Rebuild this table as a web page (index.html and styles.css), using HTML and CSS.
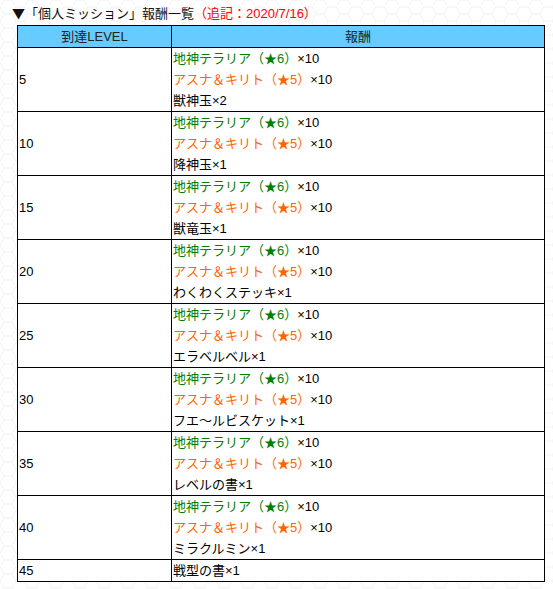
FILE: index.html
```html
<!DOCTYPE html>
<html lang="ja">
<head>
<meta charset="utf-8">
<link rel="stylesheet" href="styles.css">
</head>
<body>
<div class="page">
  <p class="title"><span class="mark">▼</span>「個人ミッション」報酬一覧<span class="note">（追記：2020/7/16）</span></p>
  <table class="rewards">
    <colgroup><col class="c-level"><col class="c-reward"></colgroup>
    <thead>
      <tr><th>到達LEVEL</th><th>報酬</th></tr>
    </thead>
    <tbody>
      <tr><td>5</td><td><span class="g">地神テラリア（★6）</span>×10<br><span class="o">アスナ＆キリト（★5）</span>×10<br>獣神玉×2</td></tr>
      <tr><td>10</td><td><span class="g">地神テラリア（★6）</span>×10<br><span class="o">アスナ＆キリト（★5）</span>×10<br>降神玉×1</td></tr>
      <tr><td>15</td><td><span class="g">地神テラリア（★6）</span>×10<br><span class="o">アスナ＆キリト（★5）</span>×10<br>獣竜玉×1</td></tr>
      <tr><td>20</td><td><span class="g">地神テラリア（★6）</span>×10<br><span class="o">アスナ＆キリト（★5）</span>×10<br>わくわくステッキ×1</td></tr>
      <tr><td>25</td><td><span class="g">地神テラリア（★6）</span>×10<br><span class="o">アスナ＆キリト（★5）</span>×10<br>エラベルベル×1</td></tr>
      <tr><td>30</td><td><span class="g">地神テラリア（★6）</span>×10<br><span class="o">アスナ＆キリト（★5）</span>×10<br>フエ〜ルビスケット×1</td></tr>
      <tr><td>35</td><td><span class="g">地神テラリア（★6）</span>×10<br><span class="o">アスナ＆キリト（★5）</span>×10<br>レベルの書×1</td></tr>
      <tr><td>40</td><td><span class="g">地神テラリア（★6）</span>×10<br><span class="o">アスナ＆キリト（★5）</span>×10<br>ミラクルミン×1</td></tr>
      <tr><td>45</td><td>戦型の書×1</td></tr>
    </tbody>
  </table>
</div>
</body>
</html>
```

FILE: styles.css
```css
html, body {
  margin: 0;
  padding: 0;
}
body {
  background-color: #ffffff;
  background-image: url("data:image/svg+xml;utf8,<svg xmlns='http://www.w3.org/2000/svg' width='24' height='14' viewBox='0 0 24 14'><path d='M0 7 L4 0 L12 0 L16 7 L12 14 L4 14 Z M16 7 L24 7' fill='none' stroke='%23f2f2f2' stroke-width='1'/></svg>");
  background-size: 24px 14px;
  color: #000;
  font-family: "Liberation Sans", "Noto Sans CJK JP", sans-serif;
  font-size: 13px;
}
.page {
  padding: 0 0 0 17px;
}
.title {
  margin: 0 0 0 -5px;
  padding-top: 3px;
  height: 22px;
  line-height: 20px;
  font-size: 13px;
  color: #111;
}
.mark {
  font-family: "Noto Sans CJK JP", sans-serif;
}
.note {
  color: #ff0000;
}
.rewards {
  border-collapse: collapse;
  width: 528px;
  background: #fff;
}
.c-level { width: 154px; }
.rewards th, .rewards td {
  border: 1px solid #000;
  padding: 0 1px;
  height: 21px;
  line-height: 21px;
  font-weight: normal;
  vertical-align: middle;
}
.rewards th {
  background: #66ccff;
  text-align: center;
  color: #222;
}
.rewards td {
  text-align: left;
}
.g { color: #008000; }
.o { color: #ff6600; }
```
